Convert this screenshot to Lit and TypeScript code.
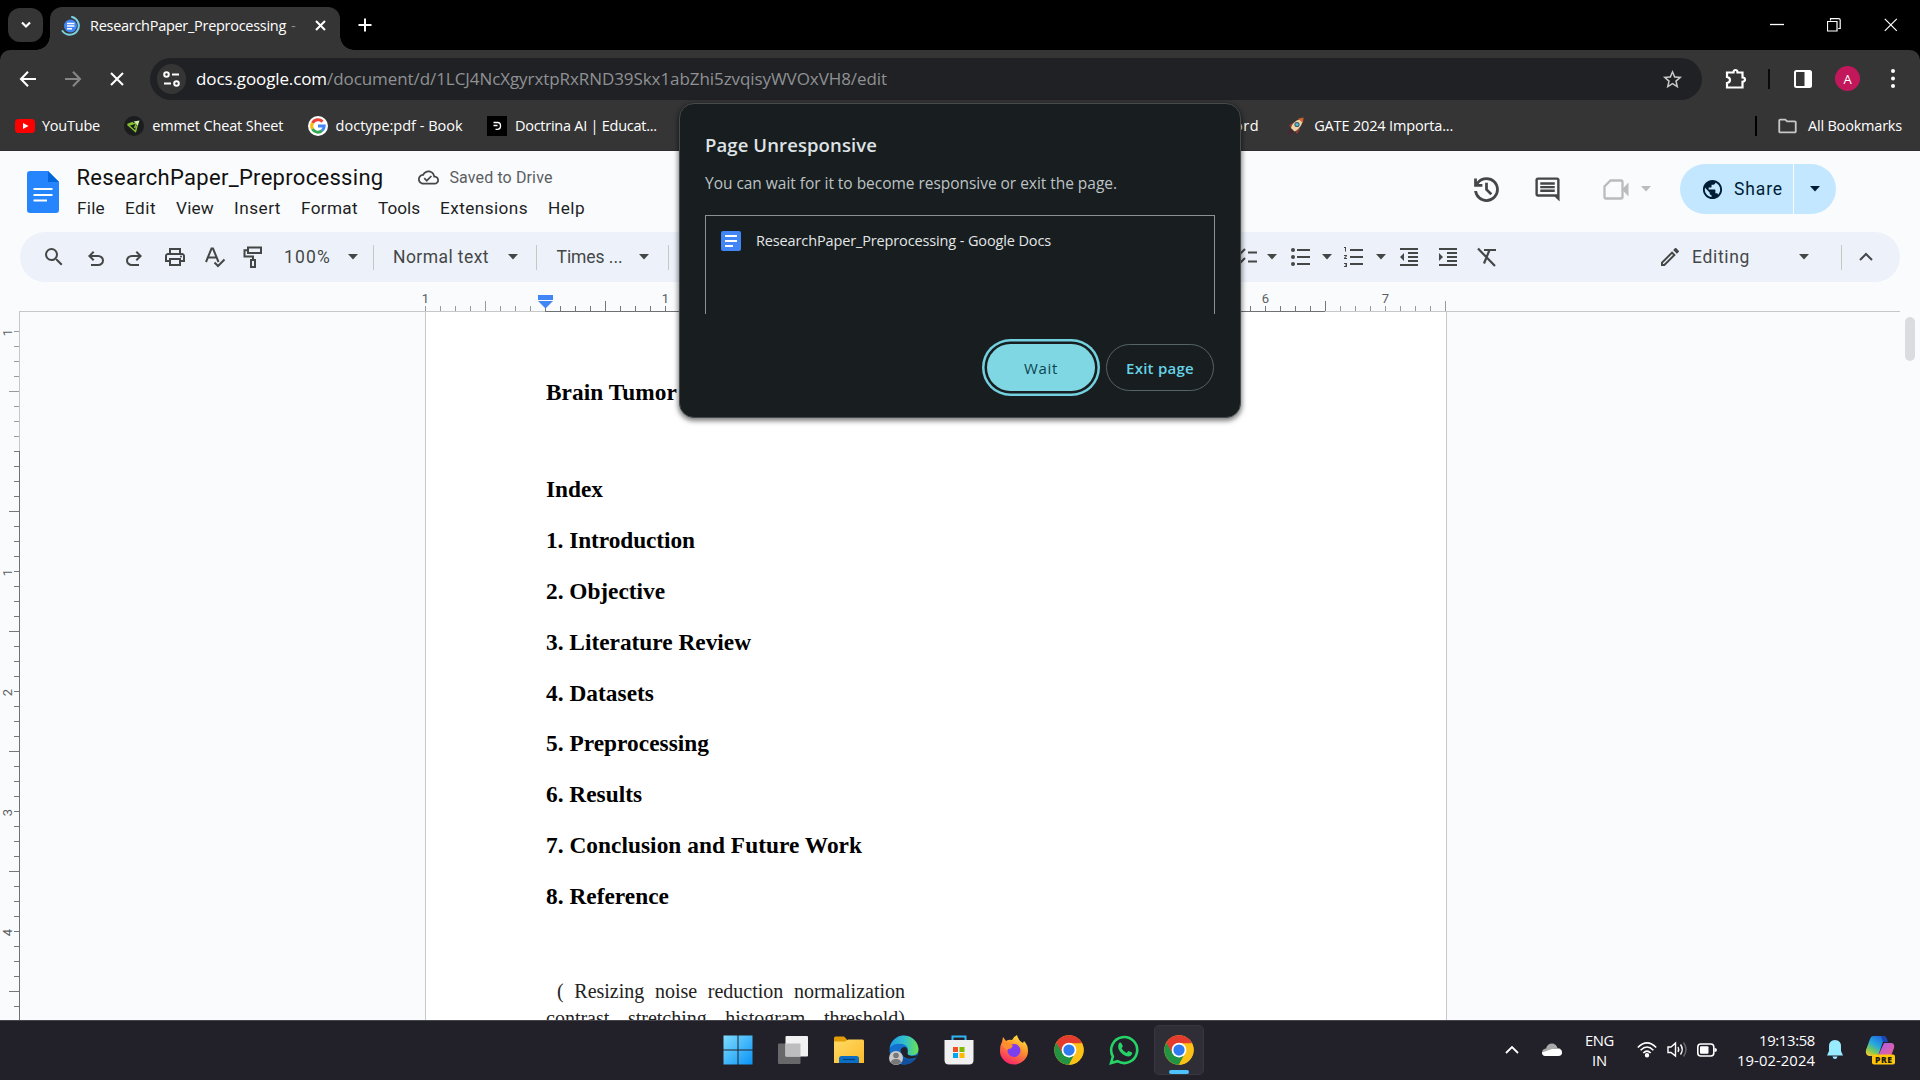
import { LitElement, html, svg, css, nothing } from "lit";
import { customElement, property } from "lit/decorators.js";

/* Text run that is tracked so that its advance equals a given width. */
@customElement("fit-text")
class FitText extends LitElement {
  @property({ type: Number }) w = 0;
  @property() text = "";
  static styles = css`
    :host { display: inline-block; white-space: pre; flex: none; }
  `;
  render() {
    return html`<span>${this.text}</span>`;
  }
  updated() {
    const s = this.renderRoot.querySelector("span") as HTMLElement;
    s.style.letterSpacing = "0px";
    const natural = s.getBoundingClientRect().width;
    s.style.letterSpacing = `${(this.w - natural) / this.text.length}px`;
    this.style.width = `${this.w}px`;
  }
}

const t = (text: string, w: number, cls = "") =>
  html`<fit-text class=${cls} .text=${text} .w=${w}></fit-text>`;

const icon = (d: string, cls = "") =>
  html`<svg class="i ${cls}" viewBox="0 0 24 24"><path d=${d} fill="currentColor" /></svg>`;

const P = {
  search: "M15.5 14h-.79l-.28-.27A6.471 6.471 0 0 0 16 9.5 6.5 6.5 0 1 0 9.5 16c1.61 0 3.09-.59 4.23-1.57l.27.28v.79l5 4.99L20.49 19l-4.99-5zm-6 0C7.01 14 5 11.99 5 9.5S7.01 5 9.5 5 14 7.01 14 9.5 11.99 14 9.5 14z",
  undo: "M7 19v-2h7.1q1.575 0 2.737-1Q18 15 18 13.5T16.838 11Q15.675 10 14.1 10H7.8l2.6 2.6L9 14 4 9l5-5 1.4 1.4L7.8 8h6.3q2.425 0 4.163 1.575Q20 11.15 20 13.5t-1.737 3.925Q16.525 19 14.1 19z",
  print: "M19 8h-1V3H6v5H5c-1.66 0-3 1.34-3 3v6h4v4h12v-4h4v-6c0-1.66-1.34-3-3-3zM8 5h8v3H8V5zm8 12v2H8v-4h8v2zm2-2v-2H6v2H4v-4c0-.55.45-1 1-1h14c.55 0 1 .45 1 1v4h-2zM17 11.500a1 1 0 1 0 2 0a1 1 0 1 0 -2 0z",
  history: "M12 21q-3.45 0-6.012-2.287T3.05 13H5.1q.35 2.6 2.313 4.3T12 19q2.925 0 4.963-2.037T19 12t-2.037-4.962T12 5q-1.725 0-3.225.8T6.25 8H9v2H3V4h2v2.35q1.275-1.6 3.113-2.475T12 3q1.875 0 3.513.713t2.85 1.924 1.925 2.85T21 12t-.712 3.513-1.925 2.85-2.85 1.925T12 21m2.8-4.8L11 12.4V7h2v4.6l3.2 3.2z",
  comment: "M21.99 4c0-1.1-.89-2-1.99-2H4c-1.1 0-2 .9-2 2v12c0 1.1.9 2 2 2h14l4 4-.01-18zM20 4v12H4V4h16zM6 12h12v2H6v-2zm0-3h12v2H6V9zm0-3h12v2H6V6z",
  globe: "M12 2C6.48 2 2 6.48 2 12s4.48 10 10 10 10-4.480 10-10S17.520 2 12 2zm-1 17.930c-3.950-.490-7-3.850-7-7.930 0-.620.080-1.210.210-1.790L9 15v1c0 1.100.900 2 2 2v1.930zm6.900-2.540c-.260-.810-1-1.390-1.900-1.390h-1v-3c0-.550-.450-1-1-1H8v-2h2c.550 0 1-.450 1-1V7h2c1.100 0 2-.900 2-2v-.410c2.930 1.190 5 4.060 5 7.410 0 2.080-.800 3.970-2.100 5.390z",
  indent: "M3 21h18v-2H3v2zM3 8v8l4-4-4-4zm8 9h10v-2H11v2zM3 3v2h18V3H3zm8 6h10V7H11v2zm0 4h10v-2H11v2z",
  outdent: "M11 17h10v-2H11v2zm-8-5l4 4V8l-4 4zm0 9h18v-2H3v2zM3 3v2h18V3H3zm8 6h10V7H11v2zm0 4h10v-2H11v2z",
  pencil: "M14.06 9.02l.92.92L5.92 19H5v-.92l9.060-9.060M17.660 3c-.250 0-.510.100-.700.290l-1.830 1.830 3.750 3.750 1.830-1.830c.390-.390.390-1.020 0-1.410l-2.340-2.340c-.200-.200-.450-.290-.710-.290zm-3.600 3.190L3 17.250V21h3.750L17.810 9.940l-3.750-3.750z",
  cloudDone: "M19.35 10.04C18.67 6.59 15.64 4 12 4 9.11 4 6.6 5.64 5.35 8.04 2.34 8.36 0 10.91 0 14c0 3.31 2.69 6 6 6h13c2.76 0 5-2.24 5-5 0-2.64-2.05-4.78-4.65-4.960zM19 18H6c-2.210 0-4-1.790-4-4 0-2.050 1.530-3.760 3.560-3.970l1.070-.110.500-.950C8.080 7.140 9.940 6 12 6c2.620 0 4.880 1.860 5.390 4.430l.300 1.500 1.530.110c1.560.100 2.780 1.410 2.780 2.960 0 1.650-1.350 3-3 3zm-9-3.820l-2.090-2.090L6.500 13.500 10 17l6.010-6.010-1.410-1.410z",
  star: "M22 9.24l-7.190-.620L12 2 9.190 8.630 2 9.240l5.460 4.730L5.820 21 12 17.270 18.180 21l-1.630-7.030L22 9.240zM12 15.400l-3.760 2.270 1-4.280-3.320-2.880 4.380-.380L12 6.100l1.710 4.040 4.380.380-3.320 2.880 1 4.280L12 15.400z",
  folder: "M9.17 6l2 2H20v10H4V6h5.170M10 4H4c-1.100 0-1.990.900-1.990 2L2 18c0 1.100.900 2 2 2h16c1.100 0 2-.900 2-2V8c0-1.100-.900-2-2-2h-8l-2-2z",
};

const arrow = () => html`<svg class="caret" viewBox="0 0 10 6"><path d="M0 0h10L5 5.500z" fill="currentColor" /></svg>`;
const line = (cls: string, vb: string, d: string, sw = 2) =>
  html`<svg class=${cls} viewBox=${vb}><path d=${d} fill="none" stroke="currentColor" stroke-width=${sw} /></svg>`;

/* Inch ruler with eighth marks; n counts eighths, zero is the margin. */
const TICK = 15;
@customElement("inch-ruler")
class InchRuler extends LitElement {
  @property({ type: Boolean }) vertical = false;
  static styles = css`
    :host { display: block; font: 13px Roboto, sans-serif; }
    svg { display: block; }
    text { fill: #5b5e61; text-anchor: middle; }
  `;
  render() {
    if (this.vertical) {
      const marks = Array.from({ length: 46 }, (_, k) => k - 8);
      return html`<svg width="20" height="708" viewBox="0 312 20 708" shape-rendering="crispEdges">
        <path d="M19.5 311V451" stroke="#c7c7c7" /><path d="M19.500 451V1020" stroke="#6f7275" />
        ${marks.map((n) => {
          const y = 451.5 + n * TICK;
          const half = (n + 80) % 8 === 4;
          return svg`<path d="M${half ? 9 : 14} ${y}H19" stroke=${n < 0 ? "#989b9e" : "#75787b"} />
            ${n % 8 === 0 && n !== 0 ? svg`<text transform="translate(12 ${y + 1}) rotate(-90)">${Math.abs(n / 8)}</text>` : nothing}`;
        })}
      </svg>`;
    }
    const marks = Array.from({ length: 69 }, (_, k) => k - 8);
    return html`<svg width="1900" height="30" viewBox="0 282 1900 30" shape-rendering="crispEdges">
      <path d="M19 311.500H545M1325 311.500H1900" stroke="#c7c7c7" /><path d="M545 311.500H1325" stroke="#6f7275" />
      ${marks.map((n) => {
        const x = 545.5 + n * TICK;
        const tall = (n + 80) % 8 === 4;
        return svg`<path d="M${x} ${tall ? 301 : 306}V311" stroke=${n < 0 || n > 52 ? "#989b9e" : "#75787b"} />
          ${n % 8 === 0 && n !== 0 ? svg`<text x=${x} y="303">${Math.abs(n / 8)}</text>` : nothing}`;
      })}
      <path d="M538 295h15v5h-15z" fill="#4285f4" />
      <path d="M538 301h15l-7.500 7.500z" fill="#4285f4" shape-rendering="auto" />
    </svg>`;
  }
}

const docIcon = html`<svg class="docfav" viewBox="0 0 20 20"><rect width="20" height="20" rx="2" fill="#4285f4" />
  <path d="M4 5h12M4 10h12M4 15h8" stroke="#fff" stroke-width="2.200" /></svg>`;

const chrome = html`<svg class="task" viewBox="0 0 48 48">
  <circle cx="24" cy="24" r="23.500" fill="#fbc116" />
  <path d="M3.600 12.300A23.500 23.500 0 0 0 24 47.500L34 30 24 24 14 24z" fill="#229342" />
  <path d="M24 13H44.700A23.500 23.500 0 0 1 24 47.500L33.500 29z" fill="#fbc116" />
  <path d="M3.600 12.300A23.500 23.500 0 0 1 44.700 13H24L14 29.500z" fill="#e33b2e" />
  <circle cx="24" cy="24" r="11.800" fill="#fff" /><circle cx="24" cy="24" r="9" fill="#2f7cf0" />
</svg>`;

@customElement("app-root")
class AppRoot extends LitElement {
  static styles = css`
    :host { display: block; width: 1920px; height: 1080px; overflow: hidden; position: relative;
      font-family: "Open Sans", "Noto Sans", sans-serif; color: #fff; }
    * { box-sizing: border-box; }
    svg { display: block; flex: none; }
    .i { width: 24px; height: 24px; }
    .flip { transform: scaleX(-1); }
    .caret { width: 10px; height: 6px; }
    .row { display: flex; align-items: center; }

    .tabs { height: 50px; background: #000; padding-left: 8px; display: flex; align-items: flex-start; }
    .chev { width: 35px; height: 34px; border-radius: 12px; background: #353535; margin-top: 8px; display: grid; place-items: center; }
    .chev svg { width: 12px; height: 8px; }
    .tab { position: relative; width: 290px; height: 43px; margin: 7px 0 0 7px; background: #353535; border-radius: 12px 12px 0 0; padding: 0 14px 6px 11px; font-size: 14.500px; line-height: 20px; }
    .tab::before, .tab::after { content: ""; position: absolute; bottom: 0; width: 14px; height: 14px; }
    .tab::before { left: -14px; background: radial-gradient(circle at 0 0, transparent 13.500px, #353535 14px); }
    .tab::after { right: -14px; background: radial-gradient(circle at 100% 0, transparent 13.500px, #353535 14px); }
    .tab .load { width: 20px; height: 20px; margin-right: 9px; }
    .dash { color: #8c8c8c; margin-left: 5px; width: 22px; }
    .x { width: 11px; height: 11px; margin-left: auto; }
    .plus { width: 14px; height: 14px; margin: 18px 0 0 18px; }
    .win { margin: 18px 23px 0 auto; display: grid; grid-template-columns: 14px 14px 13px; column-gap: 43px; align-items: center; }
    .win svg { width: 14px; height: 14px; }

    .nav { height: 57px; background: #353535; border-radius: 10px 10px 0 0; padding: 0 0 0 19px; }
    .navwrap { background: #000; }
    .nav > svg { width: 18px; height: 18px; }
    .nav .stop { width: 14px; height: 14px; }
    .nav .fwd { color: #868686; margin: 0 28px 0 27px; }
    .omni { margin-left: 26px; width: 1552px; height: 42px; border-radius: 21px; background: #202124; padding: 0 20px 0 7px; font-size: 17px; line-height: 24px; margin-top: 1px; }
    .site { width: 29px; height: 30px; border-radius: 15px; background: #353535; display: grid; place-items: center; margin-right: 10px; }
    .site svg { width: 17px; height: 16px; }
    .path { color: #8f9194; }
    .omni .star { margin-left: auto; width: 23px; height: 23px; color: #c7c7c7; margin-right: -2px; }
    .nav .puz { width: 22px; height: 22px; margin-left: 23px; }
    .nvd { width: 2px; height: 20px; background: #0a0a0a; margin: 0 24px 0 21px; }
    .nav .side { width: 18px; height: 18px; }
    .ava { width: 25px; height: 25px; border-radius: 50%; background: #c2185b; margin: 0 31px 0 23px; display: grid; place-items: center; font-size: 13px; }
    .nav .dots { width: 4px; height: 19px; }

    .marks { height: 44px; background: #353535; border-bottom: 1px solid #302c33; padding: 0 18px 6px 15px; font-size: 14.500px; line-height: 20px; }
    .bm { display: flex; align-items: center; gap: 8px; margin-right: 24.300px; }
    .bm:first-child { gap: 7px; }
    .bm svg { width: 20px; height: 20px; }
    .word { margin-left: 539px; margin-right: 27px; }
    .bmd { width: 2px; height: 20px; background: #000; margin: 0 19px 0 auto; }
    .marks .fold { width: 23px; height: 22px; color: #c7c7c7; margin-right: 9px; }

    .docs { height: 869px; background: #f9fbfd; color: #444746; font-family: Roboto, "Liberation Sans", sans-serif; display: flex; flex-direction: column; }
    .head { height: 81px; padding: 12px 84px 0 27px; display: flex; align-items: flex-start; }
    .logo { width: 32px; height: 42px; margin: 8px 18px 0 0; }
    .titles { display: flex; flex-direction: column; }
    .name { height: 28px; color: #111; font-size: 22px; margin-left: -.500px; }
    .name .cd { width: 23px; height: 21px; margin: 0 10px 0 33px; color: #444746; }
    .saved { font-size: 16px; color: #5b5e61; margin-top: 1px; }
    .menu { display: flex; gap: 20px; height: 30px; align-items: center; font-size: 17.200px; color: #1f1f1f; margin-top: 2px; }
    .acts { margin-left: auto; height: 50px; color: #444746; margin-top: 1px; }
    .hist { width: 33px; height: 33px; margin-right: 30px; }
    .comm { width: 29px; height: 29px; margin-right: 41px; }
    .vid { width: 26px; height: 21px; color: #b9bbbd; margin-right: 12px; }
    .acts > .caret { color: #b9bbbd; margin-right: 29px; }
    .share { height: 50px; background: #c2e7ff; border-radius: 25px 0 0 25px; width: 113px; padding-left: 21px; color: #001d35; font-size: 17.500px; font-weight: 450; gap: 10px; }
    .share svg { width: 23px; height: 23px; }
    .more { height: 50px; width: 42px; margin-left: 1px; background: #c2e7ff; border-radius: 0 25px 25px 0; color: #001d35; display: grid; place-items: center; }
    .tools { height: 50px; margin: 0 20px; border-radius: 25px; background: #edf2fa; padding: 0 18px 0 13px; display: flex; justify-content: space-between; font-size: 17.500px; }
    .grid { display: grid; align-items: center; justify-items: center; }
    .g1 { grid-template-columns: 41px 43px 34px 48px 31px 46px 63px 27px 14px 122px 22px 25px 81px 28px 20px; }
    .g1 svg:nth-child(2), .g1 svg:nth-child(3) { margin-top: 3px; }
    .g2 { grid-template-columns: 23px 28px 30px 21px 34px 19px 38px 40px 38px; margin-left: 557px; }
    .g3 { grid-template-columns: 40px 143px 16px 33px; margin-left: auto; }
    .tools .sep { width: 1px; height: 25px; background: #c7c7c7; }
    .mode { display: flex; justify-content: space-between; align-items: center; width: 117px; justify-self: start; margin-left: 2px; }
    .stage { flex: 1; display: flex; min-height: 0; }
    .sheet { margin-left: 405px; width: 1022px; border: solid #c7c7c7; border-width: 0 1px; background: #fff; padding: 72px 0 0 120px; color: #000;
      font-family: "Liberation Serif", "Times New Roman", serif; overflow: hidden; height: 708px; }
    .sheet div { white-space: nowrap; }
    .h { font-size: 23.330px; font-weight: 700; line-height: 27px; height: 27px; }
    .title { margin-bottom: 70px; margin-top: -5px; }
    .toc { height: 50.900px; }
    .para { font-size: 20px; line-height: 27px; display: flex; justify-content: space-between; width: 359px; color: #222; }
    .p1 { padding-left: 11px; margin-top: 44px; }
    .scroll { margin: 5px 5px 0 auto; width: 10px; height: 44px; border-radius: 5px; background: #dadce0; }

    .bar { height: 60px; background: #22212a; border-top: 1px solid #45454b; display: flex; justify-content: flex-end; align-items: center; padding: 0 25px 2px 0; }
    .apps { display: grid; grid-template-columns: repeat(9, 55.150px); justify-items: center; align-items: center; margin-right: 298px; height: 57px; }
    .task { width: 30px; height: 30px; }
    .active { width: 50px; height: 50px; border-radius: 5px; background: #2f2e37; border: 1px solid #38373f; position: relative; display: grid; place-items: center; }
    .active i { position: absolute; left: 14px; bottom: 0; width: 20px; height: 4px; border-radius: 2px; background: #4cc2ff; }
    .tray { font-size: 14.800px; line-height: 20px; }
    .tray .up { width: 14px; height: 8px; margin-right: 23px; }
    .tray .cl { width: 20px; height: 14px; margin-right: 23px; }
    .stack { display: flex; flex-direction: column; align-items: center; }
    .end { align-items: flex-end; margin: 0 12px 0 20px; }
    .tray .wifi { width: 20px; height: 17px; margin: 0 10px 0 23px; }
    .tray .spk { width: 20px; height: 17px; margin-right: 10px; }
    .tray .bat { width: 20px; height: 14px; }
    .tray .bell { width: 16px; height: 20px; margin-right: 22px; }
    .tray .cop { width: 30px; height: 30px; margin-top: 1px; font: 800 8.500px "Open Sans", sans-serif; }

    .dialog { position: absolute; left: 679px; top: 103px; width: 562px; height: 315px; border-radius: 15px; background: #181d1f; border: 1px solid #454b4d;
      box-shadow: 0 2px 5px 1px rgba(0, 0, 0, .5); padding: 28px 25px 24px 25px; display: flex; flex-direction: column; }
    .dt { font-size: 18.500px; font-weight: 600; line-height: 26px; color: #dee3e5; }
    .db { font-size: 15.500px; line-height: 22px; color: #bcc3c5; margin: 13.500px 0 21px; }
    .list { width: 510px; height: 99.500px; border: 1px solid #8b9294; border-bottom: 0; padding: 14.500px 15px; display: flex; align-items: flex-start; gap: 15px; font-size: 14.500px; line-height: 21px; color: #e3e6e7; }
    .docfav { width: 20px; height: 20px; margin-top: 1px; }
    .btns { display: flex; justify-content: flex-end; margin-top: 30px; gap: 11px; font-size: 15px; font-weight: 600; margin-right: 1px; }
    .btn { width: 108px; height: 47px; border-radius: 24px; display: grid; place-items: center; }
    .wait { background: #80d7e4; color: #0b4550; box-shadow: 0 0 0 2.500px #181d1f, 0 0 0 5px #73d0df; font-weight: 500; }
    .exit { border: 1px solid #566468; color: #67d3e6; }
  `;

  tabStrip() {
    return html`<div class="tabs">
      <div class="chev">${line("", "0 0 12 8", "M2 1.500L6 5.500L10 1.500", 2.2)}</div>
      <div class="tab row">
        <svg class="load" viewBox="0 0 20 20"><circle cx="9.500" cy="10" r="6.500" fill="#4285f4" />
          <path d="M6 7.500h7.500M6 10h7.500M6 12.700h5" stroke="#fff" stroke-width="1.500" />
          <path d="M11 1A9 9 0 1 1 1.500 15" fill="none" stroke="#78d3e2" stroke-width="2" stroke-linecap="round" /></svg>
        ${t("ResearchPaper_Preprocessing", 196)}<span class="dash">-</span>
        ${line("x", "0 0 11 11", "M1 1l9 9M10 1l-9 9", 2)}
      </div>
      ${line("plus", "0 0 14 14", "M7 0.500v13M0.500 7h13", 2)}
      <div class="win">
        ${line("", "0 0 14 14", "M0 6.500h14", 1.3)}
        ${line("", "0 0 14 14", "M.5 3.500h9.500v9.500h-9.500zM3.500 2.500V.6h8.200q1.500 0 1.500 1.500v8.400h-2", 1.2)}
        ${line("", "0 0 14 14", "M.8 .8l12 12M12.800 .8l-12 12", 1.2)}
      </div>
    </div>`;
  }

  navBar() {
    return html`<div class="navwrap"><div class="nav row">
      ${line("", "0 0 18 18", "M17 9H2.500M9 1.800L2 9l7 7.200", 2.1)}
      ${line("fwd", "0 0 18 18", "M1 9h14.500M9 1.800L16 9l-7 7.200", 2.1)}
      ${line("stop", "0 0 14 14", "M1 1l12 12M13 1l-12 12", 2.1)}
      <div class="omni row">
        <div class="site"><svg viewBox="0 0 17 16" fill="none" stroke="#fff" stroke-width="2"><circle cx="3.500" cy="3.500" r="2.300" /><path d="M9 3.500h7M1 12.500h7" /><circle cx="13.500" cy="12.500" r="2.300" /></svg></div>
        ${t("docs.google.com", 131)}${t("/document/d/1LCJ4NcXgyrxtpRxRND39Skx1abZhi5zvqisyWVOxVH8/edit", 560, "path")}
        ${icon(P.star, "star")}
      </div>
      ${line("puz", "0 0 22 22", "M2 4.500H8.500Q8.500 2 10.500 2T12.500 4.500H17.500V9.500Q20 9.500 20 11.500T17.500 13.800V19.500H2V15Q5 14.500 5 12T2 9z", 2.2)}
      <div class="nvd"></div>
      <svg class="side" viewBox="0 0 18 18"><rect x="1" y="1" width="16" height="16" rx="1.500" fill="none" stroke="#fff" stroke-width="2" /><path d="M10.500 1H17V17H10.500z" fill="#fff" /></svg>
      <div class="ava">A</div>
      <svg class="dots" viewBox="0 0 4 19" fill="#fff"><circle cx="2" cy="2" r="2" /><circle cx="2" cy="9.500" r="2" /><circle cx="2" cy="17" r="2" /></svg>
    </div></div>`;
  }

  bookmarks() {
    return html`<div class="marks row">
      <div class="bm"><svg viewBox="0 0 20 20"><rect y="3" width="20" height="14" rx="3.500" fill="#f00" /><path d="M8 7l5.500 3L8 13z" fill="#fff" /></svg>${t("YouTube", 58)}</div>
      <div class="bm"><svg viewBox="0 0 20 20"><circle cx="10" cy="10" r="10" fill="#1a1c1e" /><path d="M3.500 8.500L9 6.500M3.500 8.500L11.500 15.500L13 10M5.500 9L13 6.500L10.500 12" fill="none" stroke="#86c232" stroke-width="1.500" /><path d="M9.500 5.500L15.500 4.500L13.500 10.500L12.500 7.500z" fill="#d5efb0" /></svg>${t("emmet Cheat Sheet", 131)}</div>
      <div class="bm"><svg viewBox="0 0 20 20"><circle cx="10" cy="10" r="10" fill="#fff" /><g fill="none" stroke-width="3"><path d="M4.500 7A6.200 6.200 0 0 1 14.500 5.600" stroke="#ea4335" /><path d="M4.500 13A6.200 6.200 0 0 1 4.500 7" stroke="#fbbc05" /><path d="M4.500 13A6.200 6.200 0 0 0 14 14.700" stroke="#34a853" /><path d="M14 14.700A6.200 6.200 0 0 0 16.200 10H10" stroke="#4285f4" /></g></svg>${t("doctype:pdf - Book", 127)}</div>
      <div class="bm"><svg viewBox="0 0 20 20"><rect width="20" height="20" fill="#000" /><path d="M6.500 6.500h4q3 0 3 3v.8q0 3-3 3H8.500M6.500 9.500h4" fill="none" stroke="#fff" stroke-width="1.300" /></svg>${t("Doctrina AI | Educat...", 142)}</div>
      ${t("Word", 39, "word")}
      <div class="bm"><svg viewBox="0 0 20 20"><path d="M3 9.500L7 6.500L14 13L11 18L8.500 14L5 12z" fill="#8f3d35" /><path d="M4 13L1 19.500L8 16z" fill="#4a2730" /><path d="M5 12C6 7 11 3 16.500 3C17 8 13.500 13 8.500 15.500z" fill="#f0d3a4" /><path d="M12 2.800L17.500 1.500L17 7z" fill="#d9622b" /><circle cx="11" cy="8.500" r="2.600" fill="#3b5b6b" /><circle cx="11" cy="8.500" r="1.600" fill="#57b8d6" /></svg>${t("GATE 2024 Importa...", 139)}</div>
      <div class="bmd"></div>${icon(P.folder, "fold")}${t("All Bookmarks", 94)}
    </div>`;
  }

  header() {
    const menus: [string, number][] = [["File", 28], ["Edit", 31], ["View", 38], ["Insert", 47], ["Format", 57], ["Tools", 42], ["Extensions", 88], ["Help", 37]];
    return html`<div class="head">
      <svg class="logo" viewBox="0 0 32 42"><path d="M3 0H21L32 11V39Q32 42 29 42H3Q0 42 0 39V3Q0 0 3 0z" fill="#2684fc" /><path d="M21 0L32 11H21z" fill="#0066da" /><path d="M6.500 18h19M6.500 24h19M6.500 29.500h13.500" stroke="#fff" stroke-width="2" /></svg>
      <div class="titles">
        <div class="name row">${t("ResearchPaper_Preprocessing", 307)}${icon(P.cloudDone, "cd")}${t("Saved to Drive", 103, "saved")}</div>
        <div class="menu">${menus.map(([m, w]) => t(m, w))}</div>
      </div>
      <div class="acts row">
        ${icon(P.history, "hist")}${icon(P.comment, "comm")}
        <svg class="vid" viewBox="0 0 26 21"><path d="M7.500 1.500H18Q19.500 1.500 19.500 3V18Q19.500 19.500 18 19.500H3Q1.500 19.500 1.500 18V7.500z" fill="none" stroke="currentColor" stroke-width="2.300" /><path d="M19 10.500L25.500 3.500V17.500z" fill="currentColor" /></svg>
        ${arrow()}
        <div class="share row">${icon(P.globe)}${t("Share", 49)}</div>
        <div class="more">${arrow()}</div>
      </div>
    </div>`;
  }

  toolbar() {
    const sep = html`<div class="sep"></div>`;
    return html`<div class="tools">
      <div class="grid g1">
        ${icon(P.search)}${icon(P.undo)}${icon(P.undo, "flip")}${icon(P.print)}
        ${line("i", "0 0 24 24", "M3 17L8.500 3.500h1.500L15.500 17M5 12.500h8.500M11.500 17.500l3.500 3.500 6.500-6.500", 2)}
        ${line("i", "0 0 24 24", "M7 2.500H20V8H7zM7 5.200H3.500V11.500H12V15M10 15h4v7h-4z", 2)}
        ${t("100%", 47)}${arrow()}${sep}${t("Normal text", 96)}${arrow()}${sep}${t("Times ...", 66)}${arrow()}${sep}
      </div>
      <div class="grid g2">
        ${line("i", "0 0 24 24", "M13 7.500h9M13 16.500h9M1 7l3 3 6-6M1 16l3 3 6-6", 2)}
        ${arrow()}
        <svg class="i" viewBox="0 0 24 24" fill="currentColor"><circle cx="4" cy="5" r="2" /><circle cx="4" cy="12" r="2" /><circle cx="4" cy="19" r="2" /><path d="M8 4h13v2H8zM8 11h13v2H8zM8 18h13v2H8z" /></svg>
        ${arrow()}
        <svg class="i" viewBox="0 0 24 24" fill="currentColor"><path d="M2 19h2v.500H3v1h1v.500H2v1h3v-4H2v1zm1-12.500h1V2H2v1h1v3.500zm-1 4.500h1.800L2 13.100v.900h3v-1H3.200L5 10.900V10H2v1zM8 4h13v2H8zM8 11h13v2H8zM8 18h13v2H8z" /></svg>
        ${arrow()}
        ${icon(P.outdent)}${icon(P.indent)}
        ${line("i", "0 0 24 24", "M3 3.500L20 21M9 5H21M14.500 5L9 18.500", 2.2)}
      </div>
      <div class="grid g3">
        ${icon(P.pencil)}
        <div class="mode">${t("Editing", 58)}${arrow()}</div>
        ${sep}
        ${line("i", "0 0 24 24", "M6 15l6-6 6 6", 2)}
      </div>
    </div>`;
  }

  sheet() {
    const toc: [string, number][] = [["Index", 57], ["1. Introduction", 149], ["2. Objective", 119], ["3. Literature Review", 205], ["4. Datasets", 108], ["5. Preprocessing", 163], ["6. Results", 96], ["7. Conclusion and Future Work", 316], ["8. Reference", 123]];
    return html`<div class="stage">
      <inch-ruler vertical></inch-ruler>
      <div class="sheet">
        <div class="h title">${t("Brain Tumor", 131)}</div>
        ${toc.map(([s, w]) => html`<div class="h toc">${t(s, w)}</div>`)}
        <div class="para p1"><span>(</span><span>Resizing</span><span>noise</span><span>reduction</span><span>normalization</span></div>
        <div class="para"><span>contrast</span><span>stretching</span><span>histogram</span><span>threshold)</span></div>
      </div>
      <div class="scroll"></div>
    </div>`;
  }

  taskbar() {
    return html`<div class="bar">
      <div class="apps">
        <svg class="task" viewBox="0 0 30 30"><defs><linearGradient id="w" x2="1" y2="1"><stop stop-color="#7fdcff" /><stop offset="1" stop-color="#0a93f5" /></linearGradient></defs><path d="M.5 .5h14v14H.5zM15.500 .5h14v14h-14zM.5 15.500h14v14H.5zM15.500 15.500h14v14h-14z" fill="url(#w)" /></svg>
        <svg class="task" viewBox="0 0 30 30"><rect y="8.500" width="22.500" height="20.500" rx="1" fill="#68686b" /><rect x="7.500" y="1" width="22.500" height="20.500" rx="1" fill="#f1f1f1" /><path d="M7.500 8.500h15v13h-15z" fill="#bdbdbf" /></svg>
        <svg class="task" viewBox="0 0 30 30"><defs><linearGradient id="f" y2="1"><stop stop-color="#ffdb65" /><stop offset="1" stop-color="#fdb92b" /></linearGradient></defs><path d="M0 3q0-1.500 1.500-1.500H10l3 3V12H0z" fill="#e19c06" /><path d="M0 6.500H11l3-2H28.500q1.500 0 1.500 1.500V28H0z" fill="url(#f)" /><path d="M5 28v-4.500q0-2.500 2.500-2.500h15q2.500 0 2.500 2.500V28z" fill="#0d6fc4" /><path d="M9 24.500h12" stroke="#063f7f" stroke-width="1.200" /></svg>
        <svg class="task" viewBox="0 0 30 30"><defs><linearGradient id="e" x2="1"><stop stop-color="#1d9be8" /><stop offset=".55" stop-color="#35c1c7" /><stop offset="1" stop-color="#6be34c" /></linearGradient></defs><circle cx="15" cy="15" r="14.500" fill="#1470cd" /><path d="M.7 13A14.500 14.500 0 0 1 29.500 14Q29.500 20.500 22 20.500Q17.500 20 19 17Q20 11 13.500 9Q5 7.500 .7 13z" fill="url(#e)" /><path d="M12 17q0 8 10 7.500 4 0 5.500-2Q23 30 14 29.500 8 25 12 17z" fill="#12509f" /><path d="M11.500 15q1-3 4.500-3 3 1 2.500 4.500-1 4 4 4.500 4 .3 6-1.500l-1 3q-9 3-13-1-3-3-3-6.500z" fill="#22212a" /><circle cx="7" cy="23" r="7" fill="#c9c9c9" /><circle cx="7" cy="20.500" r="2.800" fill="#777" /><path d="M2 27.500q0-3.500 5-3.500t5 3.500q-5 4.500-10 0z" fill="#777" /></svg>
        <svg class="task" viewBox="0 0 30 30"><path d="M8.500 6V1.500h13V6" fill="none" stroke="#2fb5f3" stroke-width="2" /><path d="M.5 5h29v20q0 4.500-4.500 4.500H5q-4.500 0-4.500-4.500z" fill="#f0f0f1" /><path d="M9 12h5v5H9z" fill="#f25022" /><path d="M15.500 12h5v5h-5z" fill="#7fba00" /><path d="M9 18h5v5H9z" fill="#00a4ef" /><path d="M15.500 18h5v5h-5z" fill="#ffb900" /></svg>
        <svg class="task" viewBox="0 0 30 30"><defs><linearGradient id="x" x1=".8" x2=".3" y2="1"><stop stop-color="#fff04a" /><stop offset=".4" stop-color="#ff9a2a" /><stop offset="1" stop-color="#f8216b" /></linearGradient></defs><path d="M3 7l1-5 3 4q3-2 6-1 1-3 5-5 1 5 6 8l1-2q4 4 4 10A14 13.500 0 0 1 1 16Q1 10 3 7z" fill="url(#x)" /><circle cx="15" cy="15.500" r="6.500" fill="#7b3ff0" /><path d="M3 9q5-2 8 .5l3 1-2 3q-4 0-4 2-3-3-5-6.500z" fill="#ff8f2e" /></svg>
        ${chrome}
        <svg class="task" viewBox="0 0 30 30"><path d="M2 28l1.900-6.500A13 13 0 1 1 8.500 26.200z" fill="none" stroke="#25d366" stroke-width="2.600" /><path d="M10 8q1.500-1 2.300 0l1.500 3q0 1-1.300 2.300 2 3.600 5.200 4.700 1.300-2 2-2l3.300 1.600q.8 1-1 3-3 2.400-8-1.200Q7 14 10 8z" fill="#25d366" /></svg>
        <div class="active">${chrome}<i></i></div>
      </div>
      <div class="tray row">
        ${line("up", "0 0 14 8", "M1 7l6-6 6 6", 1.8)}
        <svg class="cl" viewBox="0 0 20 14"><path d="M4 13Q0 13 0 9.500T4 5.500Q5.500 .5 10 .5 14 .5 15.500 5q4 0 4.500 4t-4 4z" fill="#a9a9ac" /><path d="M3 13Q0 12 0 9.500L10 6l7.500 0Q20 7 20 9.500T16 13z" fill="#fff" /></svg>
        <div class="stack">${t("ENG", 29)}${t("IN", 15)}</div>
        <svg class="wifi" viewBox="0 0 20 17" fill="none" stroke="#fff" stroke-width="1.600"><path d="M.8 6.500Q10-2.800 19.200 6.500M3.600 9.200Q10 2.800 16.400 9.200M6.300 12Q10 8.300 13.700 12" /><circle cx="10" cy="14.300" r="1.400" fill="#fff" /></svg>
        <svg class="spk" viewBox="0 0 20 17" fill="none" stroke="#fff" stroke-width="1.400"><path d="M1 6h3l4.500-4v13L4 11.500H1zM11 6q1.500 2.500 0 5M13.500 3.500q3.500 5 0 10" /><path d="M16.500 1.500q5 7 0 14" stroke="#66666b" /></svg>
        <svg class="bat" viewBox="0 0 20 14"><rect x=".8" y="1" width="16" height="12" rx="3" fill="none" stroke="#fff" stroke-width="1.600" /><rect x="3" y="3.300" width="8.500" height="7.500" rx="1" fill="#fff" /><path d="M17.500 5q2.500 0 2.500 2t-2.500 2z" fill="#fff" /></svg>
        <div class="stack end">${t("19:13:58", 56)}${t("19-02-2024", 78)}</div>
        <svg class="bell" viewBox="0 0 16 20" fill="#99ebff"><path d="M8 0q6 0 6 6.500v4.500l2 4.500H0L2 11V6.500Q2 0 8 0zM5.500 16.500h5q-.5 2.500-2.500 2.500t-2.500-2.500z" /></svg>
        <svg class="cop" viewBox="0 0 30 30"><defs><linearGradient id="c1" x1=".8" x2=".2" y2="1"><stop stop-color="#2464dc" /><stop offset=".45" stop-color="#24a8e0" /><stop offset=".75" stop-color="#78c95a" /><stop offset="1" stop-color="#f4c930" /></linearGradient><linearGradient id="c2" y2="1"><stop stop-color="#a75df0" /><stop offset="1" stop-color="#f2608f" /></linearGradient></defs><path d="M8 1h12l-7 20H4Q0 20 1 15L5 4Q6 1 8 1z" fill="url(#c1)" /><path d="M16 1h3q2.500 0 4 6h-5z" fill="#1b48b5" /><path d="M19 8h7q4 0 3 5l-3 8H13z" fill="url(#c2)" /><rect x="7" y="19.500" width="23" height="10" rx="2" fill="#ffc60a" /><text x="18.500" y="27.800" text-anchor="middle" fill="#1b1a14" textLength="17">PRE</text></svg>
      </div>
    </div>`;
  }

  render() {
    return html`
      ${this.tabStrip()}${this.navBar()}${this.bookmarks()}
      <div class="docs">${this.header()}${this.toolbar()}<inch-ruler></inch-ruler>${this.sheet()}</div>
      ${this.taskbar()}
      <div class="dialog">
        <div class="dt">${t("Page Unresponsive", 172)}</div>
        <div class="db">${t("You can wait for it to become responsive or exit the page.", 412)}</div>
        <div class="list">${docIcon}${t("ResearchPaper_Preprocessing - Google Docs", 295)}</div>
        <div class="btns"><div class="btn wait">${t("Wait", 34)}</div><div class="btn exit">${t("Exit page", 68)}</div></div>
      </div>`;
  }
}
